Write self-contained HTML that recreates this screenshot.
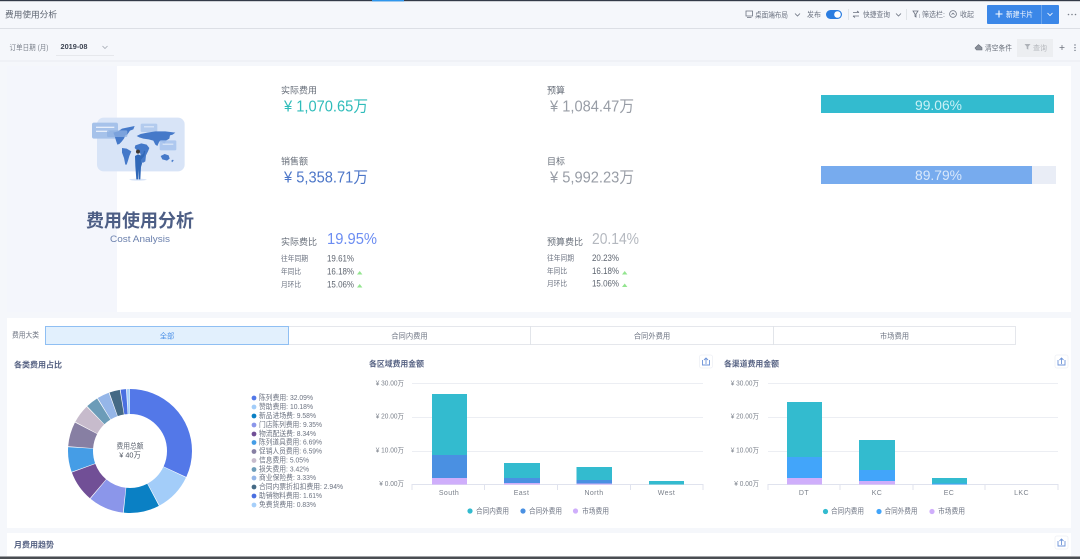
<!DOCTYPE html>
<html lang="zh"><head><meta charset="utf-8"><title>费用使用分析</title>
<style>
html,body{margin:0;padding:0;width:1080px;height:559px;overflow:hidden;background:#f5f7fb}
svg{display:block;font-family:"Liberation Sans","Noto Sans CJK SC",sans-serif;filter:blur(.3px)}
svg text{dominant-baseline:central}
.s{font-size:9px;fill:#666d78}
.t{font-size:8px;fill:#666d78}
.h{font-size:8px;fill:#566283;font-weight:bold}
.l{font-size:7.3px;fill:#6b7280}
.a{font-size:7px;fill:#7b818b}
.v{font-size:16px}
.n{font-size:9px;fill:#5e6570}
.g{stroke:#eceef3;stroke-width:1}
.k{stroke:#e0e3ee;stroke-width:1;fill:none}
.i{fill:none;stroke:#6b7280;stroke-width:.8}
</style></head><body>
<svg width="1080" height="559" viewBox="0 0 1080 559" xmlns="http://www.w3.org/2000/svg">
<rect width="1080" height="559" fill="#f5f7fb"/>
<!-- top -->
<rect width="1080" height="1.2" fill="#333a48"/>
<rect x="372" width="32" height="1.4" fill="#2f97ee"/>
<rect y="28" width="1080" height="1" fill="#dcdfe5"/>
<text x="5" y="14.5" class="t" style="font-size:8.7px;fill:#5d6470" textLength="52" lengthAdjust="spacingAndGlyphs">费用使用分析</text>
<!-- top right controls -->
<path class="i" d="M746 11h6.5v5h-6.5zM747 17.6h4.5"/>
<text x="755" y="15" class="l" textLength="33" lengthAdjust="spacingAndGlyphs">桌面端布局</text>
<path class="i" d="M795 13.5l2.5 2.5 2.5-2.5"/>
<text x="807" y="14.5" class="l" textLength="14" lengthAdjust="spacingAndGlyphs">发布</text>
<rect x="826" y="10" width="16" height="9" rx="4.5" fill="#2b7de0"/><circle cx="837.5" cy="14.5" r="3.3" fill="#fff"/>
<rect x="848" y="9" width=".7" height="11" fill="#d8dbe1"/>
<path class="i" d="M853 12.5h6M853 16h6M857 11l2 1.5M855 17.5l-2-1.5"/>
<text x="863" y="14.5" class="l" textLength="27" lengthAdjust="spacingAndGlyphs">快捷查询</text>
<path class="i" d="M896 13.5l2.5 2.5 2.5-2.5"/>
<rect x="906" y="9" width=".7" height="11" fill="#d8dbe1"/>
<path class="i" d="M913 11h5l-2 3v3l-1-.6v-2.4zM919 15h1M919 17h1"/>
<text x="922" y="14.5" class="l" textLength="23" lengthAdjust="spacingAndGlyphs">筛选栏:</text>
<circle class="i" cx="953" cy="14" r="3.4"/><path class="i" d="M951.5 14.6l1.5-1.4 1.5 1.4"/>
<text x="960" y="14.5" class="l" textLength="14" lengthAdjust="spacingAndGlyphs">收起</text>
<rect x="987" y="5" width="72" height="19" rx="1" fill="#3b87e8"/>
<rect x="1041" y="5" width=".7" height="19" fill="#7fb0ee"/>
<path d="M999 10.5v7M995.5 14h7" stroke="#fff" stroke-width="1.1"/>
<text x="1006" y="14.5" class="l" style="fill:#fff" textLength="27" lengthAdjust="spacingAndGlyphs">新建卡片</text>
<path d="M1047.5 13l2.5 2.5 2.5-2.5" fill="none" stroke="#fff" stroke-width=".8"/>
<circle cx="1068.5" cy="14.5" r=".8" fill="#7b818b"/><circle cx="1072" cy="14.5" r=".8" fill="#7b818b"/><circle cx="1075.5" cy="14.5" r=".8" fill="#7b818b"/>
<!-- filter row -->
<text x="9.5" y="47.5" class="l" style="fill:#7c828c" textLength="39" lengthAdjust="spacingAndGlyphs">订单日期 (月)</text>
<text x="60.5" y="46.5" style="font-size:7.5px;font-weight:bold;fill:#3d4452" textLength="27" lengthAdjust="spacingAndGlyphs">2019-08</text>
<path d="M102.5 46l2.5 2.5 2.5-2.5" fill="none" stroke="#9aa0aa" stroke-width=".7"/>
<rect x="56" y="55" width="58" height=".7" fill="#dfe2e7"/>
<path d="M975 48l3.5-3.5 3.5 3v2.5h-5.5z" fill="#8a909a" stroke="#666d78" stroke-width=".6"/>
<text x="985" y="48" class="l" style="fill:#666d78" textLength="27" lengthAdjust="spacingAndGlyphs">清空条件</text>
<rect x="1017" y="39" width="36" height="18" fill="#eceef1"/>
<path d="M1024.5 44h6l-2.2 2.6v3l-1.6-.8v-2.2z" fill="#aeb2b8"/>
<text x="1033" y="48" class="l" style="fill:#b5b8bd" textLength="14" lengthAdjust="spacingAndGlyphs">查询</text>
<path d="M1059.5 47.5h5M1062 45v5" stroke="#707680" stroke-width=".8"/>
<circle cx="1075" cy="45" r=".7" fill="#6b7280"/><circle cx="1075" cy="47.7" r=".7" fill="#6b7280"/><circle cx="1075" cy="50.4" r=".7" fill="#6b7280"/>
<rect y="60" width="1080" height="2" fill="#eff1f6"/>
<!-- panel -->
<rect x="7" y="66" width="110" height="246" fill="#f4f6fc"/>
<rect x="117" y="66" width="954" height="246" fill="#fff"/>
<!-- illustration -->
<g transform="translate(88 112) scale(.3333)">
<rect x="27" y="17" width="263" height="161" rx="20" fill="#d8e4f7"/>
<rect x="12" y="32" width="78" height="48" rx="6" fill="#a6c2ea"/>
<rect x="24" y="44" width="55" height="4" fill="#e6eefa"/><rect x="24" y="56" width="40" height="4" fill="#e6eefa"/>
<rect x="158" y="35" width="50" height="25" rx="4" fill="#b3cbee"/>
<rect x="168" y="43" width="30" height="3" fill="#e6eefa"/>
<g fill="#4579c9">
<path d="M76 62l14-4 12-8 18-4 20-4-4 10-10 4-8 12-6 2-4 10-8 10-6 6-6 2-4-12-4-14z"/>
<path d="M102 108l14 2 14 8-6 14-4 14-4 12-4 0-4-20-6-16z"/>
<path d="M146 72l12-6 20-4 24-4 30 0 30 4-8 6-8 2-2 10-10 6-4 12-8-8-8-2-6 14-6-4-6-12-14-4-16-2-12-4z"/>
<path d="M142 100l18-6 16 4 8 10-4 10-6 12-2 18-6 4-4 0-2-16-4-14-10-8-6-6z"/>
<path d="M218 132l12-6 12 4 3 10-8 6-14-4z"/>
<path d="M250 146l5-3 2 3-5 5z"/>
</g>
<rect x="215" y="85" width="50" height="30" rx="4" fill="#aac6ee" opacity=".92"/>
<rect x="224" y="95" width="32" height="3" fill="#e6eefa"/>
<rect x="57" y="55" width="61" height="20" rx="4" fill="#8db0e2" opacity=".75"/>
<ellipse cx="150" cy="203" rx="26" ry="3" fill="#d8e4f7"/>
<circle cx="150" cy="119" r="6" fill="#40372f"/>
<path d="M141 132l9-5 10 4 2 24-3 10-2 37h-5l-1-30-1 30h-5l-3-40z" fill="#3068b8"/>
<path d="M158 132l8-7 2-9 4 1-3 15-9 10z" fill="#3068b8"/>
</g>
<text x="86" y="221" style="font-size:18px;font-weight:bold;fill:#4d5e85" textLength="108" lengthAdjust="spacingAndGlyphs">费用使用分析</text>
<text x="110" y="239.5" style="font-size:9.5px;fill:#6b80ad" textLength="60" lengthAdjust="spacingAndGlyphs">Cost Analysis</text>
<!-- metrics -->
<text x="281" y="90.5" class="s" textLength="36" lengthAdjust="spacingAndGlyphs">实际费用</text>
<text x="284" y="107" class="v" style="fill:#2fbcba" textLength="84" lengthAdjust="spacingAndGlyphs">¥ 1,070.65万</text>
<text x="547" y="90.5" class="s" textLength="18" lengthAdjust="spacingAndGlyphs">预算</text>
<text x="550" y="107" class="v" style="fill:#989da6" textLength="84" lengthAdjust="spacingAndGlyphs">¥ 1,084.47万</text>
<text x="281" y="161.5" class="s" textLength="27" lengthAdjust="spacingAndGlyphs">销售额</text>
<text x="284" y="178" class="v" style="fill:#4c76c8" textLength="84" lengthAdjust="spacingAndGlyphs">¥ 5,358.71万</text>
<text x="547" y="161.5" class="s" textLength="18" lengthAdjust="spacingAndGlyphs">目标</text>
<text x="550" y="178" class="v" style="fill:#989da6" textLength="84" lengthAdjust="spacingAndGlyphs">¥ 5,992.23万</text>
<rect x="821" y="95" width="233" height="18" fill="#33bbcf"/>
<text x="915" y="105" style="font-size:14px;fill:#c9f1f6" textLength="47" lengthAdjust="spacingAndGlyphs">99.06%</text>
<rect x="821" y="166" width="235" height="18" fill="#e9edf6"/>
<rect x="821" y="166" width="211" height="18" fill="#77abee"/>
<text x="915" y="175" style="font-size:14px;fill:#d9e8fb" textLength="47" lengthAdjust="spacingAndGlyphs">89.79%</text>
<text x="281" y="242" class="s" textLength="36" lengthAdjust="spacingAndGlyphs">实际费比</text>
<text x="327" y="239.5" style="font-size:16px;fill:#6c8df2" textLength="50" lengthAdjust="spacingAndGlyphs">19.95%</text>
<text x="547" y="242" class="s" textLength="36" lengthAdjust="spacingAndGlyphs">预算费比</text>
<text x="592" y="239.5" style="font-size:16px;fill:#b4b8bf" textLength="47" lengthAdjust="spacingAndGlyphs">20.14%</text>
<text x="281" y="258.5" class="l" textLength="27" lengthAdjust="spacingAndGlyphs">往年同期</text><text x="327" y="258.5" class="n" textLength="27" lengthAdjust="spacingAndGlyphs">19.61%</text>
<text x="281" y="271.5" class="l" textLength="20" lengthAdjust="spacingAndGlyphs">年同比</text><text x="327" y="271.5" class="n" textLength="27" lengthAdjust="spacingAndGlyphs">16.18%</text>
<text x="281" y="284.5" class="l" textLength="20" lengthAdjust="spacingAndGlyphs">月环比</text><text x="327" y="284.5" class="n" textLength="27" lengthAdjust="spacingAndGlyphs">15.06%</text>
<text x="547" y="258" class="l" textLength="27" lengthAdjust="spacingAndGlyphs">往年同期</text><text x="592" y="258" class="n" textLength="27" lengthAdjust="spacingAndGlyphs">20.23%</text>
<text x="547" y="271" class="l" textLength="20" lengthAdjust="spacingAndGlyphs">年同比</text><text x="592" y="271" class="n" textLength="27" lengthAdjust="spacingAndGlyphs">16.18%</text>
<text x="547" y="283.5" class="l" textLength="20" lengthAdjust="spacingAndGlyphs">月环比</text><text x="592" y="283.5" class="n" textLength="27" lengthAdjust="spacingAndGlyphs">15.06%</text>
<g fill="#93e58f"><path d="M357 274.5l2.7-3.5 2.7 3.5z"/><path d="M357 287.5l2.7-3.5 2.7 3.5z"/><path d="M622 274.5l2.7-3.5 2.7 3.5z"/><path d="M622 287l2.7-3.5 2.7 3.5z"/></g>
<!-- card 2 -->
<rect x="7" y="318" width="1064" height="210" fill="#fff"/>
<text x="12" y="335" class="l" textLength="27" lengthAdjust="spacingAndGlyphs">费用大类</text>
<g fill="#fff" stroke="#dfe2e8" stroke-width=".8">
<rect x="288.5" y="326.5" width="242" height="18"/><rect x="530.5" y="326.5" width="243" height="18"/><rect x="773.5" y="326.5" width="242" height="18"/>
</g>
<rect x="45.5" y="326.5" width="243" height="18" fill="#e2f0fd" stroke="#8fbff3"/>
<text x="167" y="336" text-anchor="middle" class="l" style="fill:#4a8fe6">全部</text>
<text x="409.5" y="336" text-anchor="middle" class="l">合同内费用</text>
<text x="652" y="336" text-anchor="middle" class="l">合同外费用</text>
<text x="894.5" y="336" text-anchor="middle" class="l">市场费用</text>
<text x="14" y="365" class="h" textLength="48" lengthAdjust="spacingAndGlyphs">各类费用占比</text>
<text x="369" y="364" class="h" textLength="55" lengthAdjust="spacingAndGlyphs">各区域费用金额</text>
<text x="724" y="364" class="h" textLength="55" lengthAdjust="spacingAndGlyphs">各渠道费用金额</text>
<!-- donut -->
<g transform="rotate(-90 130 451)" fill="none" stroke-width="25">
<circle cx="130" cy="451" r="49.5" pathLength="100" stroke="#5378e8" stroke-dasharray="31.89 68.11" stroke-dashoffset="0"/>
<circle cx="130" cy="451" r="49.5" pathLength="100" stroke="#a3cdf9" stroke-dasharray="9.98 90.02" stroke-dashoffset="-32.09"/>
<circle cx="130" cy="451" r="49.5" pathLength="100" stroke="#0a80c4" stroke-dasharray="9.38 90.62" stroke-dashoffset="-42.27"/>
<circle cx="130" cy="451" r="49.5" pathLength="100" stroke="#8b96ea" stroke-dasharray="9.15 90.85" stroke-dashoffset="-51.85"/>
<circle cx="130" cy="451" r="49.5" pathLength="100" stroke="#714f96" stroke-dasharray="8.14 91.86" stroke-dashoffset="-61.2"/>
<circle cx="130" cy="451" r="49.5" pathLength="100" stroke="#459de6" stroke-dasharray="6.49 93.51" stroke-dashoffset="-69.54"/>
<circle cx="130" cy="451" r="49.5" pathLength="100" stroke="#877fa3" stroke-dasharray="6.39 93.61" stroke-dashoffset="-76.23"/>
<circle cx="130" cy="451" r="49.5" pathLength="100" stroke="#c7bbcc" stroke-dasharray="4.85 95.15" stroke-dashoffset="-82.82"/>
<circle cx="130" cy="451" r="49.5" pathLength="100" stroke="#6c9cb8" stroke-dasharray="3.22 96.78" stroke-dashoffset="-87.87"/>
<circle cx="130" cy="451" r="49.5" pathLength="100" stroke="#95b6e8" stroke-dasharray="3.13 96.87" stroke-dashoffset="-91.29"/>
<circle cx="130" cy="451" r="49.5" pathLength="100" stroke="#456a85" stroke-dasharray="2.74 97.26" stroke-dashoffset="-94.62"/>
<circle cx="130" cy="451" r="49.5" pathLength="100" stroke="#4a6fe0" stroke-dasharray="1.41 98.59" stroke-dashoffset="-97.56"/>
<circle cx="130" cy="451" r="49.5" pathLength="100" stroke="#a6cffa" stroke-dasharray=".73 99.27" stroke-dashoffset="-99.17"/>
</g>
<text x="130" y="446" text-anchor="middle" class="l" style="fill:#5d6470" textLength="27" lengthAdjust="spacingAndGlyphs">费用总额</text>
<text x="130" y="455" text-anchor="middle" class="l" style="fill:#4d5460">¥ 40万</text>
<!-- legend -->
<g>
<circle cx="254" cy="398" r="2.4" fill="#5378e8"/><text x="259" y="397.5" class="l" textLength="54" lengthAdjust="spacingAndGlyphs">陈列费用: 32.09%</text>
<circle cx="254" cy="407" r="2.4" fill="#a3cdf9"/><text x="259" y="406.5" class="l" textLength="54" lengthAdjust="spacingAndGlyphs">赞助费用: 10.18%</text>
<circle cx="254" cy="416" r="2.4" fill="#0a80c4"/><text x="259" y="415.5" class="l" textLength="57" lengthAdjust="spacingAndGlyphs">新品进场费: 9.58%</text>
<circle cx="254" cy="425" r="2.4" fill="#8b96ea"/><text x="259" y="424.5" class="l" textLength="63" lengthAdjust="spacingAndGlyphs">门店陈列费用: 9.35%</text>
<circle cx="254" cy="434" r="2.4" fill="#714f96"/><text x="259" y="433.5" class="l" textLength="57" lengthAdjust="spacingAndGlyphs">物流配送费: 8.34%</text>
<circle cx="254" cy="442.5" r="2.4" fill="#459de6"/><text x="259" y="442" class="l" textLength="63" lengthAdjust="spacingAndGlyphs">陈列道具费用: 6.69%</text>
<circle cx="254" cy="451.5" r="2.4" fill="#877fa3"/><text x="259" y="451" class="l" textLength="63" lengthAdjust="spacingAndGlyphs">促销人员费用: 6.59%</text>
<circle cx="254" cy="460.5" r="2.4" fill="#c7bbcc"/><text x="259" y="460" class="l" textLength="50" lengthAdjust="spacingAndGlyphs">信息费用: 5.05%</text>
<circle cx="254" cy="469.5" r="2.4" fill="#6c9cb8"/><text x="259" y="469" class="l" textLength="50" lengthAdjust="spacingAndGlyphs">损失费用: 3.42%</text>
<circle cx="254" cy="478" r="2.4" fill="#95b6e8"/><text x="259" y="477.5" class="l" textLength="57" lengthAdjust="spacingAndGlyphs">商业保险费: 3.33%</text>
<circle cx="254" cy="487" r="2.4" fill="#456a85"/><text x="259" y="486.5" class="l" textLength="84" lengthAdjust="spacingAndGlyphs">合同内票折扣扣费用: 2.94%</text>
<circle cx="254" cy="496" r="2.4" fill="#4a6fe0"/><text x="259" y="495.5" class="l" textLength="63" lengthAdjust="spacingAndGlyphs">助销物料费用: 1.61%</text>
<circle cx="254" cy="505" r="2.4" fill="#a6cffa"/><text x="259" y="504.5" class="l" textLength="57" lengthAdjust="spacingAndGlyphs">免费货费用: 0.83%</text>
</g>
<!-- chart 1 -->
<path class="g" d="M412 383.5H703M412 417.5H703M412 451.5H703"/>
<path class="k" d="M412 484.5H703M412 484v6M484.5 484v6M557.5 484v6M630.5 484v6M703 484v6"/>
<g class="a">
<text x="375.7" y="384" textLength="28.3" lengthAdjust="spacingAndGlyphs">¥ 30.00万</text><text x="375.7" y="417" textLength="28.3" lengthAdjust="spacingAndGlyphs">¥ 20.00万</text><text x="375.7" y="451" textLength="28.3" lengthAdjust="spacingAndGlyphs">¥ 10.00万</text><text x="379.3" y="484.5" textLength="24.7" lengthAdjust="spacingAndGlyphs">¥ 0.00万</text>
</g>
<rect x="432" y="394" width="35" height="61" fill="#33bbcf"/><rect x="432" y="455" width="35" height="23" fill="#4a90e2"/><rect x="432" y="478" width="35" height="6.5" fill="#cfaefb"/>
<rect x="504" y="463" width="36" height="15" fill="#33bbcf"/><rect x="504" y="478" width="36" height="5" fill="#4a90e2"/><rect x="504" y="483" width="36" height="1.5" fill="#cfaefb"/>
<rect x="576.5" y="467" width="35.5" height="13" fill="#33bbcf"/><rect x="576.5" y="480" width="35.5" height="3.5" fill="#4a90e2"/><rect x="576.5" y="483.5" width="35.5" height="1" fill="#cfaefb"/>
<rect x="649" y="481" width="35" height="3.5" fill="#33bbcf"/>
<g class="a" text-anchor="middle" style="letter-spacing:.4px">
<text x="449" y="493.5">South</text><text x="521.5" y="493.5">East</text><text x="594" y="493.5">North</text><text x="666.5" y="493.5">West</text>
</g>
<circle cx="470" cy="511" r="2.6" fill="#33bbcf"/><text x="476" y="511" class="l" textLength="33" lengthAdjust="spacingAndGlyphs">合同内费用</text>
<circle cx="523" cy="511" r="2.6" fill="#4a90e2"/><text x="529" y="511" class="l" textLength="33" lengthAdjust="spacingAndGlyphs">合同外费用</text>
<circle cx="575.5" cy="511" r="2.6" fill="#cfaefb"/><text x="582" y="511" class="l" textLength="27" lengthAdjust="spacingAndGlyphs">市场费用</text>
<!-- chart 2 -->
<path class="g" d="M768 383.5H1058M768 417.5H1058M768 451.5H1058"/>
<path class="k" d="M768 484.5H1058M768 484v6M840 484v6M913 484v6M985 484v6M1058 484v6"/>
<g class="a">
<text x="730.7" y="384" textLength="28.3" lengthAdjust="spacingAndGlyphs">¥ 30.00万</text><text x="730.7" y="417" textLength="28.3" lengthAdjust="spacingAndGlyphs">¥ 20.00万</text><text x="730.7" y="451" textLength="28.3" lengthAdjust="spacingAndGlyphs">¥ 10.00万</text><text x="734.3" y="484.5" textLength="24.7" lengthAdjust="spacingAndGlyphs">¥ 0.00万</text>
</g>
<rect x="787" y="402" width="35" height="55" fill="#33bbcf"/><rect x="787" y="457" width="35" height="21" fill="#42a5fa"/><rect x="787" y="478" width="35" height="6.5" fill="#cfaefb"/>
<rect x="859" y="440" width="36" height="30" fill="#33bbcf"/><rect x="859" y="470" width="36" height="11" fill="#42a5fa"/><rect x="859" y="481" width="36" height="3.5" fill="#cfaefb"/>
<rect x="932" y="478" width="35" height="5.5" fill="#33bbcf"/><rect x="932" y="483.5" width="35" height="1" fill="#42a5fa"/>
<g class="a" text-anchor="middle" style="letter-spacing:.4px">
<text x="804" y="493.5">DT</text><text x="877" y="493.5">KC</text><text x="949" y="493.5">EC</text><text x="1021.5" y="493.5">LKC</text>
</g>
<circle cx="825.5" cy="511.5" r="2.6" fill="#33bbcf"/><text x="831" y="511" class="l" textLength="33" lengthAdjust="spacingAndGlyphs">合同内费用</text>
<circle cx="879" cy="511.5" r="2.6" fill="#42a5fa"/><text x="884.5" y="511" class="l" textLength="33" lengthAdjust="spacingAndGlyphs">合同外费用</text>
<circle cx="932" cy="511.5" r="2.6" fill="#cfaefb"/><text x="938" y="511" class="l" textLength="27" lengthAdjust="spacingAndGlyphs">市场费用</text>
<!-- card 3 -->
<rect x="7" y="533" width="1064" height="23" fill="#fff"/>
<text x="14" y="545" class="h" textLength="40" lengthAdjust="spacingAndGlyphs">月费用趋势</text>
<rect y="556.5" width="1080" height="2.5" fill="#4a4d52"/>
<!-- export buttons -->
<g fill="#fff" stroke="#eef0f5" stroke-width=".8">
<rect x="699.5" y="355" width="13" height="13" rx="2"/><rect x="1055" y="355" width="13" height="13" rx="2"/><rect x="1055" y="536" width="13" height="13" rx="2"/>
</g>
<g fill="none" stroke="#6d93d8" stroke-width=".9">
<path d="M702.5 360v5h7v-5M706 364v-6M704 360l2-2 2 2"/>
<path d="M1058 360v5h7v-5M1061.5 364v-6M1059.5 360l2-2 2 2"/>
<path d="M1058 541v5h7v-5M1061.5 545v-6M1059.5 541l2-2 2 2"/>
</g>
</svg>
</body></html>
